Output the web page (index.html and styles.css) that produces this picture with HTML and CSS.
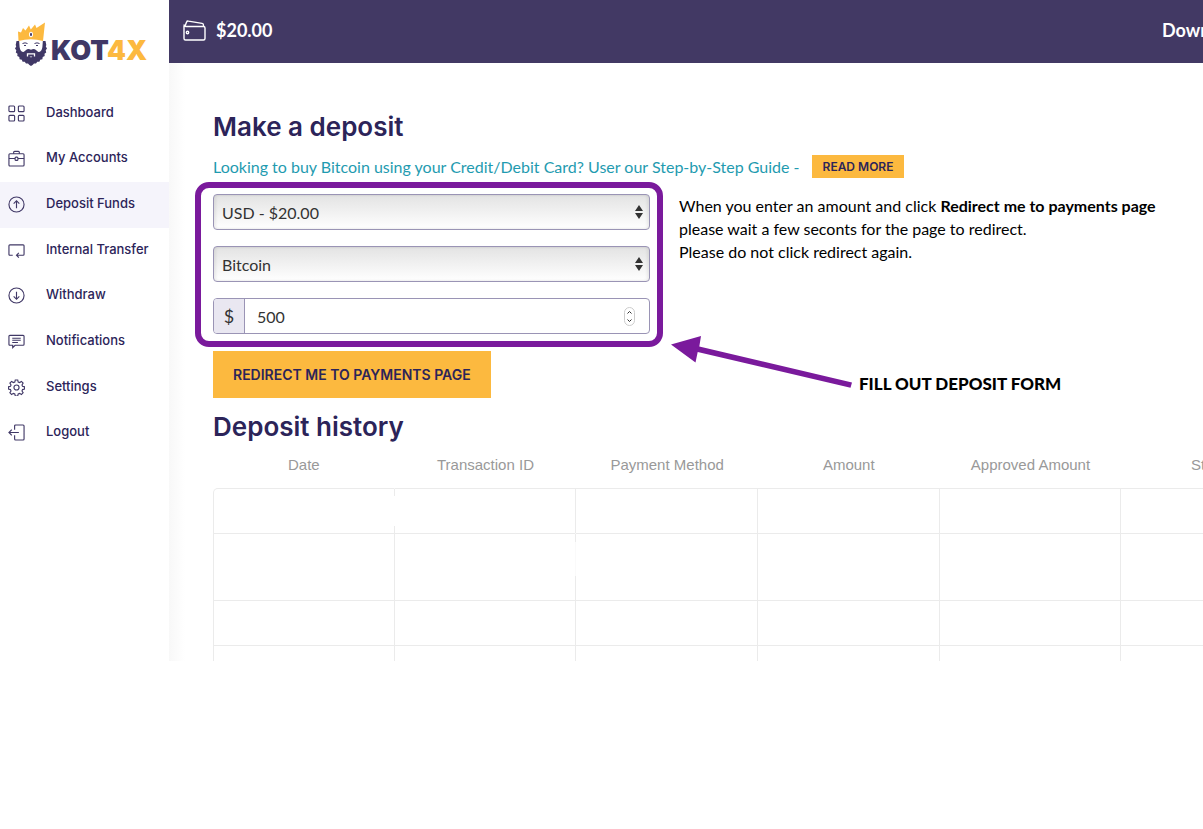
FILE: index.html
```html
<!DOCTYPE html>
<html lang="en">
<head>
<meta charset="utf-8">
<title>KOT4X - Make a deposit</title>
<link rel="stylesheet" href="styles.css">
</head>
<body>
<div class="app">
  <aside class="sidebar">
    <a class="logo" href="#">
      <svg class="logo-mark" viewBox="0 0 32 44" width="32" height="44" aria-hidden="true">
        <path fill="#403866" d="M1.500 19l-.8 4 .5 1.500L0 26.500l1.300 1.700L.8 30.500l1.700 1.300-.2 2.300 2 .9.300 2.200 2.200.5.800 2 2.100.1 1.300 1.700 2-.1L14.400 43l1.600 1 1.600-1 1.400-1.600 2 .1 1.300-1.700 2.100-.1.800-2 2.200-.5.300-2.200 2-.9-.2-2.300 1.700-1.300-.5-2.300 1.300-1.700-1.200-2 .5-1.500-.8-4z"/>
        <path fill="#fff" d="M4 17h24l-.6 8c-.4 3-1.600 4.500-3.400 5-1 .3-1.800-1-3-2-1.500-1.300-3.300-1-5-.3-1.700-.7-3.500-1-5 .3-1.200 1-2 2.300-3 2-1.800-.5-3-2-3.400-5z"/>
        <path fill="none" stroke="#403866" stroke-width="1" d="M7.500 21.500q2.500-1.300 5 0M19.500 21.500q2.500-1.300 5 0"/>
        <path fill="#403866" d="M9 23h2v1H9zM21 23h2v1h-2z"/>
        <path fill="none" stroke="#fff" stroke-width="1.300" d="M12.500 34.500v-2.700h7v2.700"/>
        <path fill="#fff" d="M14.500 34.500h3l-1.500 1z"/>
        <path fill="#fcb93f" d="M3.500 19L3 9.500l3 1 2-4.500 2.500 2.500L14 3.500l1.800 4L20 2.500l1.500 3.500L30 .5 28 19q-12-3.500-24.500 0z"/>
        <ellipse cx="16" cy="12.500" rx="2" ry="2.800" fill="#fff"/>
        <ellipse cx="16" cy="12.500" rx="1" ry="1.700" fill="#403866"/>
      </svg>
      <span class="logo-text">KOT<span class="logo-accent">4X</span></span>
    </a>
    <nav class="nav">
      <a class="nav-item" href="#">
        <svg class="icon" viewBox="0 0 18 18"><rect x="1" y="1" width="6" height="6" rx="1"/><rect x="11" y="1" width="6" height="6" rx="1"/><rect x="1" y="11" width="6" height="6" rx="1"/><rect x="11" y="11" width="6" height="6" rx="1"/></svg>
        Dashboard</a>
      <a class="nav-item" href="#">
        <svg class="icon" viewBox="0 0 18 18"><rect x="1" y="4" width="16" height="13" rx="1"/><path d="M6 4V2.500Q6 1.500 7 1.500h4q1 0 1 1V4M1 9h6.500M10.500 9H17"/><rect x="7.500" y="7.500" width="3" height="3.500" rx="1"/></svg>
        My Accounts</a>
      <a class="nav-item active" href="#" aria-current="page">
        <svg class="icon" viewBox="0 0 18 18"><circle cx="9" cy="9" r="8"/><path d="M9 13V5M6 8l3-3 3 3"/></svg>
        Deposit Funds</a>
      <a class="nav-item" href="#">
        <svg class="icon" viewBox="0 0 18 18"><path d="M5 14H2q-1 0-1-1V4q0-1 1-1h14q1 0 1 1v9q0 1-1 1H9M11.500 11.500L9 14l2.500 2.500"/></svg>
        Internal Transfer</a>
      <a class="nav-item" href="#">
        <svg class="icon" viewBox="0 0 18 18"><circle cx="9" cy="9" r="8"/><path d="M9 5v8M6 10l3 3 3-3"/></svg>
        Withdraw</a>
      <a class="nav-item" href="#">
        <svg class="icon" viewBox="0 0 18 18"><path d="M2 2.500h14q1 0 1 1V12q0 1-1 1H7.500L5 15.500V13H2q-1 0-1-1V3.500q0-1 1-1zM4.500 5.500h9M4.500 7.700h9M4.500 10h6"/></svg>
        Notifications</a>
      <a class="nav-item" href="#">
        <svg class="icon" viewBox="0 0 18 18"><circle cx="9" cy="9" r="2.700"/><path d="M7.700 1h2.600l.5 2.200 1.500.6 1.900-1.200 1.800 1.800-1.200 1.900.6 1.500 2.100.5v2.400l-2.100.5-.6 1.500 1.200 1.900-1.800 1.800-1.900-1.200-1.500.6-.5 2.200H7.700l-.5-2.200-1.500-.6-1.900 1.200L2 14.600l1.200-1.900-.6-1.500L.5 10.700V8.300l2.100-.5.6-1.500L2 4.400l1.800-1.800 1.900 1.200 1.500-.6z"/></svg>
        Settings</a>
      <a class="nav-item" href="#">
        <svg class="icon" viewBox="0 0 18 18"><path d="M7 6V2q0-1 1-1h8q1 0 1 1v14q0 1-1 1H8q-1 0-1-1v-4M11.500 9H1M4 6L1 9l3 3"/></svg>
        Logout</a>
    </nav>
  </aside>

  <div class="main">
    <header class="topbar">
      <svg class="wallet" viewBox="0 0 23 21" width="23" height="21" aria-hidden="true"><path d="M1 6v12.500q0 1.500 1.500 1.500h18q1.500 0 1.500-1.500V8q0-1.500-1.500-1.500H3Q1 6.500 1 4.500M2 6l1.600-4Q4 .8 5.500 1.100L19 3.400q1.500.3 1.500 1.800v1.300"/><circle cx="4.500" cy="12.500" r="1.200"/></svg>
      <span class="balance">$20.00</span>
      <a class="top-link" href="#">Down</a>
    </header>

    <main class="content">
      <h1 class="title">Make a deposit</h1>
      <p class="guide">Looking to buy Bitcoin using your Credit/Debit Card? User our Step-by-Step Guide - <button class="btn btn-small" type="button">READ MORE</button></p>

      <div class="deposit">
        <form class="form" id="deposit-form">
          <div class="field">
            <select class="control" aria-label="Account"><option>USD - $20.00</option></select>
            <svg class="sorter" viewBox="0 0 8 14" width="8" height="14" aria-hidden="true"><path d="M4 0l4 6H0zM4 14L0 8h8z"/></svg>
          </div>
          <div class="field">
            <select class="control" aria-label="Payment method"><option>Bitcoin</option></select>
            <svg class="sorter" viewBox="0 0 8 14" width="8" height="14" aria-hidden="true"><path d="M4 0l4 6H0zM4 14L0 8h8z"/></svg>
          </div>
          <div class="field amount">
            <label class="prefix" for="amount">$</label>
            <input class="amount-input" id="amount" type="number" value="500">
            <svg class="stepper" viewBox="0 0 11 19" width="11" height="19" aria-hidden="true"><rect x=".5" y=".5" width="10" height="18" rx="5"/><path d="M3.500 6.500l2-2 2 2M3.500 12.500l2 2 2-2"/></svg>
          </div>
          <div class="highlight"></div>
        </form>
        <p class="info">When you enter an amount and click <strong>Redirect me to payments page</strong><br>please wait a few seconts for the page to redirect.<br>Please do not click redirect again.</p>
        <div class="callout">
          <svg class="arrow" viewBox="0 0 182 52" width="182" height="52" aria-hidden="true"><path fill="#7a1a9c" d="M0 8.500L30 0l-1.700 10.600L181 46.500l-1.500 5.300L26.700 15.900 24.500 26.500z"/></svg>
          <span class="callout-text">FILL OUT DEPOSIT FORM</span>
        </div>
      </div>
      <button class="btn btn-large" type="submit" form="deposit-form">REDIRECT ME TO PAYMENTS PAGE</button>

      <h2 class="title">Deposit history</h2>
      <div class="history">
        <table class="history-table">
          <thead><tr><th>Date</th><th>Transaction ID</th><th>Payment Method</th><th>Amount</th><th>Approved Amount</th><th>Status</th></tr></thead>
          <tbody>
            <tr><td class="broken"></td><td></td><td></td><td></td><td></td><td></td></tr>
            <tr class="tall"><td></td><td class="faded"></td><td></td><td></td><td></td><td></td></tr>
            <tr><td></td><td></td><td></td><td></td><td></td><td></td></tr>
            <tr class="cut"><td></td><td></td><td></td><td></td><td></td><td></td></tr>
          </tbody>
        </table>
      </div>
    </main>
  </div>
</div>
</body>
</html>
```
FILE: styles.css
```css
* { box-sizing: border-box; }

body {
  margin: 0;
  background: #fff;
  color: #111;
  font: 16px/23px Lato, sans-serif;
}

h1, h2, p { margin: 0; }
a { color: inherit; text-decoration: none; }

.app {
  display: grid;
  grid-template-columns: 169px minmax(0, 1fr);
}

/* Sidebar */
.logo {
  display: flex;
  align-items: flex-start;
  gap: 4px;
  height: 91px;
  padding: 22px 0 0 15px;
}
.logo-text {
  padding-top: 13px;
  color: #403866;
  font: 900 27px/32px Inter, sans-serif;
}
.logo-accent { color: #fcb93f; }

.nav {
  display: flex;
  flex-direction: column;
  min-height: 365px;
}
.nav-item {
  display: flex;
  flex: 1;
  align-items: center;
  gap: 21px;
  padding: 0 0 4px 8px;
  color: #2c2459;
  font: 500 13px/20px Inter, sans-serif;
}
.nav-item.active { background: #f5f4fb; }
.icon {
  width: 17px;
  height: 17px;
  margin-top: 3px;
  fill: none;
  stroke: #403866;
  stroke-width: 1.2;
}

/* Top bar */
.main {
  overflow: hidden;
  background: linear-gradient(90deg, #f8f8f8, #fff 16px);
}
.topbar {
  display: flex;
  align-items: center;
  gap: 10px;
  height: 63px;
  padding: 0 0 2px 14px;
  overflow: hidden;
  background: #423964;
  color: #fff;
  font-size: 18px;
  font-weight: 700;
}
.wallet {
  fill: none;
  stroke: #fff;
  stroke-width: 1.4;
}
.top-link {
  width: 41px;
  margin-left: auto;
}

/* Content */
.content { padding: 48px 0 0 44px; }
.title {
  color: #2c2459;
  font: 600 26px/32px Inter, sans-serif;
}
.guide {
  display: flex;
  align-items: center;
  gap: 12px;
  margin: 12px 0 16px;
  color: #1f9bb0;
}

.btn {
  border: 0;
  background: #fcb93f;
  color: #2c2459;
  font: 600 14px/23px Inter, sans-serif;
}
.btn-small {
  padding: 0 11px;
  font-size: 12px;
}
.btn-large {
  margin: 17px 0 13px;
  padding: 12px 20px;
}

.deposit {
  position: relative;
  display: grid;
  grid-template-columns: minmax(0, 437px) 1fr;
  gap: 29px;
}
.form {
  position: relative;
  display: grid;
  gap: 16px;
}
.field {
  position: relative;
  display: flex;
  height: 36px;
}
.control {
  width: 100%;
  padding: 0 8px;
  appearance: none;
  border: 1px solid #9a94b5;
  border-radius: 4px;
  background: linear-gradient(#e3e3e3, #fff);
  box-shadow: inset 2px 0 3px #0001, inset -2px 0 3px #0001;
  color: #333;
  font: inherit;
}
.sorter {
  position: absolute;
  top: 11px;
  right: 7px;
  fill: #333;
}
.amount {
  border: 1px solid #9a94b5;
  border-radius: 4px;
}
.prefix {
  width: 31px;
  border-right: 1px solid #9a94b5;
  border-radius: 3px 0 0 3px;
  background: #e9e7f1;
  color: #333;
  font-size: 18px;
  line-height: 34px;
  text-align: center;
}
.amount-input {
  flex: 1;
  min-width: 0;
  padding: 0 12px;
  appearance: textfield;
  border: 0;
  background: none;
  color: #333;
  font: inherit;
}
.amount-input::-webkit-inner-spin-button { display: none; }
.stepper {
  position: absolute;
  top: 8px;
  right: 14px;
  fill: none;
  stroke: #333;
}
.stepper rect { stroke: #ccc; }

/* Instruction overlay around the form */
.highlight {
  position: absolute;
  inset: -12px -13px -13px -18px;
  border: 6px solid #7a1a9c;
  border-radius: 14px;
  pointer-events: none;
}
.callout {
  position: absolute;
  top: 142px;
  left: 458px;
  display: flex;
  align-items: flex-end;
  gap: 6px;
}
.callout-text {
  margin-bottom: -6px;
  color: #000;
  font: 900 17px/20px Lato, sans-serif;
}
.info { color: #000; }

/* History table */
.history { overflow: hidden; }
.history-table {
  width: 110%;
  min-width: 1090px;
  table-layout: fixed;
  border-collapse: separate;
  border-spacing: 0;
}
.history-table th {
  height: 45px;
  padding: 0 0 1px;
  color: #999;
  font: 400 15px/20px "Liberation Sans", sans-serif;
}
.history-table td {
  height: 45px;
  padding: 0;
  border: 0 solid #ebebeb;
  border-width: 1px 1px 0 0;
}
.history-table td:first-child { border-left-width: 1px; }
.history-table tbody tr:first-child td:first-child { border-top-left-radius: 5px; }
.history-table .tall td { height: 67px; }
.history-table .cut td { height: 16px; }
.history-table .broken {
  border-right-color: transparent;
  background: linear-gradient(#ebebeb 8px, transparent 8px 38px, #ebebeb 38px) right / 1px 100% no-repeat border-box;
}
.history-table .faded {
  border-right-color: transparent;
  background: linear-gradient(#ebebeb 9px, #fafafa 9px 43px, #ebebeb 43px) right / 1px 100% no-repeat border-box;
}
```
